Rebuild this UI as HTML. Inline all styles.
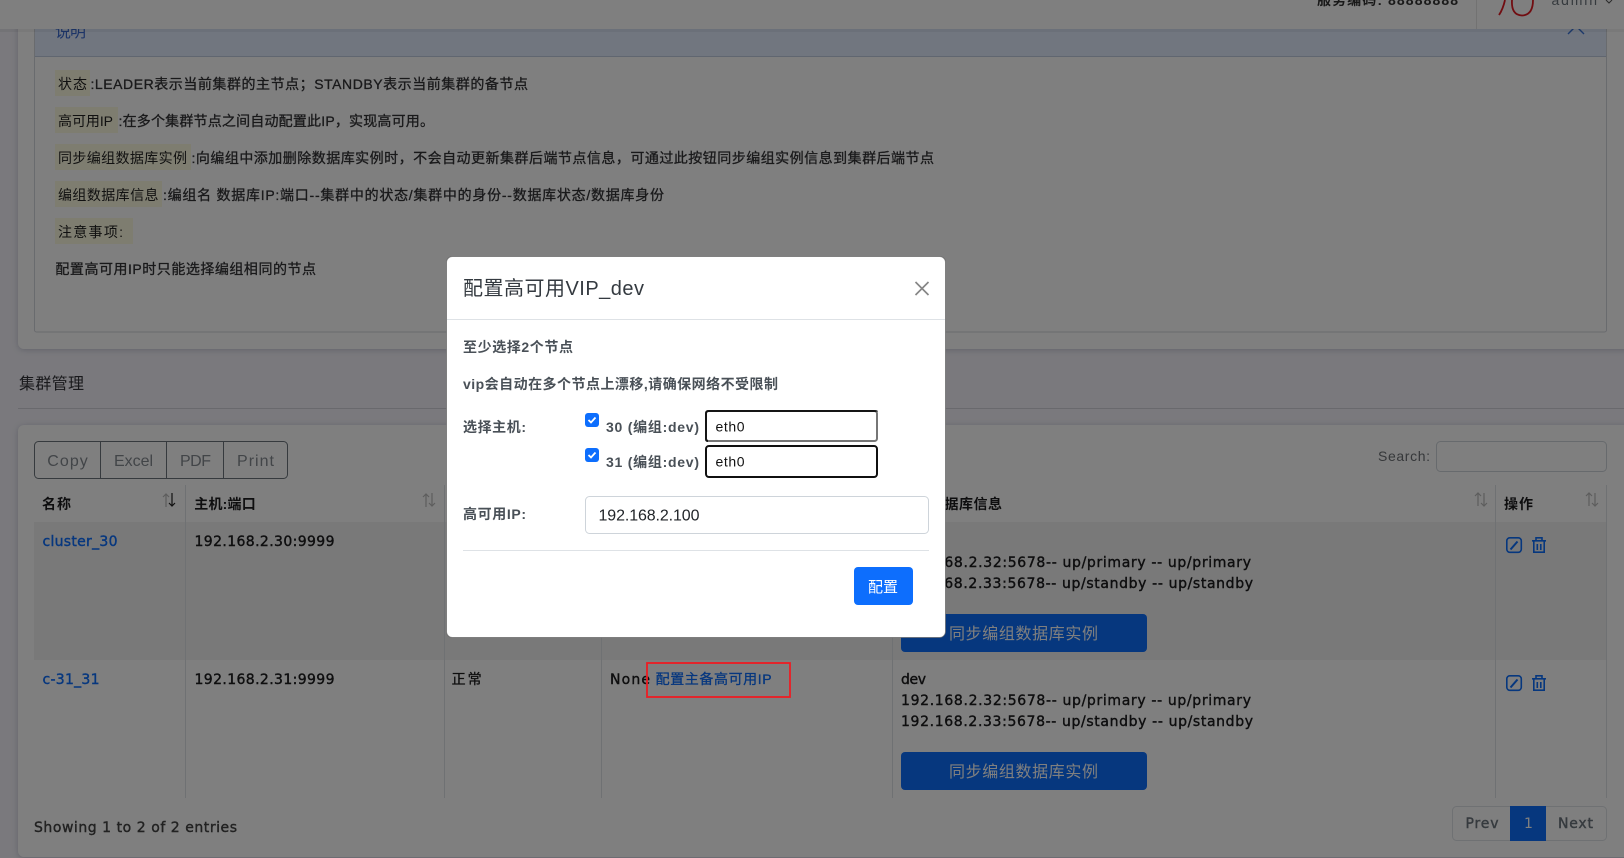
<!DOCTYPE html>
<html lang="zh-CN">
<head>
<meta charset="utf-8">
<title>集群管理</title>
<style>
html,body{margin:0;padding:0;width:1624px;height:858px;overflow:hidden;background:#f4f3fa}
svg{display:block}
text{font-family:"Liberation Sans","Noto Sans CJK SC",sans-serif;font-size:14px;white-space:pre}
.m{font-weight:500}
.b{font-weight:700}
.lk{fill:#0d6efd}
.dk{fill:#1c1c1e}
.dv{font-family:"DejaVu Sans","Noto Sans CJK SC",sans-serif;stroke-width:.4}
.dv.dk{stroke:#1c1c1e}
.dv.lk{stroke:#0d6efd}
.dv.gr{fill:#6c757d;stroke:#6c757d}
.dv.gs{fill:#444;stroke:#444}
.sb{stroke-width:.3}
.dk.sb{stroke:#1c1c1e}
.lk.sb{stroke:#0d6efd}
.pn{fill:#333336;stroke:#333336;stroke-width:.3}
.hl{fill:#fdfbe0}
.lb{fill:#222}
.md{fill:#495057;font-weight:700}
.ib{fill:none;stroke:#0d6efd;stroke-width:1.6}
.card{filter:drop-shadow(0 1px 3px rgba(56,65,100,.25))}
</style>
</head>
<body>
<svg width="1624" height="858" viewBox="0 0 1624 858" xmlns="http://www.w3.org/2000/svg">
<rect width="1624" height="858" fill="#f4f3fa"/>

<!-- card 1 -->
<rect class="card" x="18" y="-20" width="1640" height="369" rx="6" fill="#fff"/>
<rect x="34.5" y="20" width="1572" height="312" rx="2" fill="#fff" stroke="#d2d6dc"/>
<rect x="35" y="29" width="1571" height="27" fill="#e2ecff"/>
<rect x="35" y="56" width="1571" height="1" fill="#c0cce0"/>
<text x="55" y="37" style="font-size:16px" fill="#3a6bd0" textLength="31">说明</text>
<polyline points="1568,34 1576,26 1584,34" fill="none" stroke="#3a74d8" stroke-width="1.4"/>

<!-- notes -->
<rect class="hl" x="55" y="70" width="35" height="26"/>
<text x="58" y="89" class="lb" textLength="29">状态</text>
<text x="90.5" y="89" class="pn" textLength="437.5">:LEADER表示当前集群的主节点；STANDBY表示当前集群的备节点</text>

<rect class="hl" x="55" y="107" width="63" height="26"/>
<text x="58" y="126" class="lb" textLength="55">高可用IP</text>
<text x="118.5" y="126" class="pn" textLength="315.5">:在多个集群节点之间自动配置此IP，实现高可用。</text>

<rect class="hl" x="55" y="144" width="136" height="26"/>
<text x="58" y="163" class="lb" textLength="129">同步编组数据库实例</text>
<text x="191.5" y="163" class="pn" textLength="742.5">:向编组中添加删除数据库实例时，不会自动更新集群后端节点信息，可通过此按钮同步编组实例信息到集群后端节点</text>

<rect class="hl" x="55" y="181" width="107" height="26"/>
<text x="58" y="200" class="lb" textLength="100.5">编组数据库信息</text>
<text x="163" y="200" class="pn" textLength="501">:编组名 数据库IP:端口--集群中的状态/集群中的身份--数据库状态/数据库身份</text>

<rect class="hl" x="55" y="218" width="78" height="26"/>
<text x="58" y="237" class="lb" textLength="65">注意事项:</text>

<text x="55.4" y="274" class="pn" textLength="260.6">配置高可用IP时只能选择编组相同的节点</text>

<!-- section title -->
<text x="19" y="389" style="font-size:16px" fill="#333338" textLength="65">集群管理</text>
<rect x="18" y="408" width="1606" height="1" fill="#d2d2da"/>

<!-- card 2 -->
<rect class="card" x="18" y="425" width="1640" height="432" rx="6" fill="#fff"/>

<!-- buttons -->
<rect x="34.5" y="441.5" width="253" height="37" rx="4" fill="#fff" stroke="#6c757d"/>
<path d="M100.5 442V478M166.5 442V478M223.5 442V478" stroke="#6c757d"/>
<g fill="#858a91">
<text x="47.3" y="466" style="font-size:16px" textLength="40.5">Copy</text>
<text x="114" y="466" style="font-size:16px" textLength="39">Excel</text>
<text x="180" y="466" style="font-size:16px" textLength="31">PDF</text>
<text x="237" y="466" style="font-size:16px" textLength="37">Print</text>
</g>

<!-- search -->
<text x="1378" y="461" fill="#6c7075" textLength="52">Search:</text>
<rect x="1436.5" y="441.5" width="170" height="30" rx="4" fill="#fff" stroke="#ced4da"/>

<!-- table -->
<rect x="34" y="522" width="1573" height="138" fill="#f2f2f2"/>
<path d="M185.5 485V798M444.5 485V798M601.5 485V798M892.5 485V798M1495.5 485V798M1606.5 485V798" stroke="#dee2e6"/>

<text x="42" y="509" class="dk b" textLength="29">名称</text>
<text x="194.3" y="509" class="dk b" textLength="61.4">主机:端口</text>
<text x="901" y="509" class="dk b" textLength="101">编组数据库信息</text>
<text x="1504" y="509" class="dk b" textLength="29">操作</text>

<!-- sort arrows -->
<g fill="none" stroke-width="1.2">
<path d="M166 507V494M163 497L166 494L169 497" stroke="#bbb"/>
<path d="M172 493V506M169 503L172 506L175 503" stroke="#222"/>
<path d="M426 507V494M423 497L426 494L429 497M432 493V506M429 503L432 506L435 503" stroke="#bbb"/>
<path d="M1478 506V493M1475 496L1478 493L1481 496M1484 493V506M1481 503L1484 506L1487 503" stroke="#bbb"/>
<path d="M1589 506V493M1586 496L1589 493L1592 496M1595 493V506M1592 503L1595 506L1598 503" stroke="#bbb"/>
</g>

<!-- row 1 -->
<text x="42.5" y="546" class="lk dv" textLength="75">cluster_30</text>
<text x="194.5" y="546" class="dk dv" textLength="140">192.168.2.30:9999</text>
<text x="901" y="546" class="dk dv" textLength="25">dev</text>
<text x="901" y="567" class="dk dv" textLength="350">192.168.2.32:5678-- up/primary -- up/primary</text>
<text x="901" y="588" class="dk dv" textLength="352">192.168.2.33:5678-- up/standby -- up/standby</text>
<rect x="901" y="614" width="246" height="38" rx="4" fill="#0d6efd"/>
<text x="949" y="639" style="font-size:16px" fill="#fff" textLength="149">同步编组数据库实例</text>
<g>
<rect class="ib" x="1506.8" y="537.8" width="14.5" height="14.5" rx="3"/>
<path d="M1510.5 549.5L1517.5 541.5" stroke="#0d6efd" stroke-width="2" fill="none"/>
<path class="ib" d="M1532 540.8H1546M1536 540.5V537.8H1542V540.5M1533.8 541V552.2H1544.2V541M1537.3 544V550M1540.8 544V550"/>
</g>

<!-- row 2 -->
<text x="42.5" y="684" class="lk dv" textLength="57">c-31_31</text>
<text x="194.5" y="684" class="dk dv" textLength="140">192.168.2.31:9999</text>
<text x="451.6" y="684" class="dk sb" textLength="30">正常</text>
<text x="610" y="684" class="dk dv" textLength="40">None</text>
<text x="655.6" y="684" class="lk sb" textLength="116">配置主备高可用IP</text>
<text x="901" y="684" class="dk dv" textLength="25">dev</text>
<text x="901" y="705" class="dk dv" textLength="350">192.168.2.32:5678-- up/primary -- up/primary</text>
<text x="901" y="726" class="dk dv" textLength="352">192.168.2.33:5678-- up/standby -- up/standby</text>
<rect x="901" y="752" width="246" height="38" rx="4" fill="#0d6efd"/>
<text x="949" y="777" style="font-size:16px" fill="#fff" textLength="149">同步编组数据库实例</text>
<g transform="translate(0,138)">
<rect class="ib" x="1506.8" y="537.8" width="14.5" height="14.5" rx="3"/>
<path d="M1510.5 549.5L1517.5 541.5" stroke="#0d6efd" stroke-width="2" fill="none"/>
<path class="ib" d="M1532 540.8H1546M1536 540.5V537.8H1542V540.5M1533.8 541V552.2H1544.2V541M1537.3 544V550M1540.8 544V550"/>
</g>

<!-- footer -->
<text x="34" y="832" class="dv gs" textLength="203">Showing 1 to 2 of 2 entries</text>
<rect x="1452.5" y="806.5" width="154" height="34" rx="4" fill="#fff" stroke="#dee2e6"/>
<rect x="1510" y="806" width="36" height="35" fill="#0d6efd"/>
<text x="1465.5" y="828" class="dv gr" textLength="33">Prev</text>
<text x="1524" y="828" fill="#fff" class="dv">1</text>
<text x="1558" y="828" class="dv gr" textLength="35">Next</text>

<!-- top bar -->
<rect x="0" y="29" width="1624" height="3" fill="#000" opacity=".05"/>
<rect x="0" y="0" width="1624" height="29" fill="#fff"/>
<rect x="1476" y="0" width="1" height="29" fill="#e4e4e4"/>
<text x="1317" y="5" class="b" fill="#333" textLength="141">服务编码: 88888888</text>
<path d="M1505 0Q1503 9 1499 15M1512 0Q1511 15 1522 15.5Q1533 15 1533 0" fill="none" stroke="#e31b23" stroke-width="1.8"/>
<text x="1551.5" y="5" fill="#6c757d" textLength="45.5">admin</text>
<path d="M1606 0L1609 3L1612 0" fill="none" stroke="#555" stroke-width="1"/>

<!-- backdrop -->
<rect width="1624" height="858" fill="#000" opacity=".5"/>

<!-- modal -->
<rect x="446.5" y="256.5" width="499" height="381" rx="6" fill="#fff" stroke="#555" stroke-opacity=".6"/>
<rect x="447" y="319" width="498" height="1" fill="#dee2e6"/>
<text x="463" y="295" style="font-size:20px" fill="#343a40" textLength="181">配置高可用VIP_dev</text>
<path d="M915.5 282L928.5 295M928.5 282L915.5 295" stroke="#868686" stroke-width="1.7" fill="none"/>

<text x="463" y="352" class="md" textLength="110">至少选择2个节点</text>
<text x="463" y="389" class="md" textLength="315">vip会自动在多个节点上漂移,请确保网络不受限制</text>
<text x="463" y="432" class="md" textLength="63">选择主机:</text>

<rect x="585" y="413" width="14" height="14" rx="3" fill="#0d6efd"/>
<path d="M588.5 420L591 422.5L595.5 417.5" fill="none" stroke="#fff" stroke-width="1.8"/>
<text x="606" y="432" class="md" textLength="93">30 (编组:dev)</text>
<rect x="706" y="411" width="171" height="30" rx="2.5" fill="#fff" stroke="#767676" stroke-width="2"/>
<path d="M877 411.5Q877 411 874 411H708.5Q706 411 706 413.5V439Q706 441 708 441" fill="none" stroke="#151515" stroke-width="2"/>
<text x="715.5" y="431.5" fill="#111" textLength="29">eth0</text>

<rect x="585" y="448" width="14" height="14" rx="3" fill="#0d6efd"/>
<path d="M588.5 455L591 457.5L595.5 452.5" fill="none" stroke="#fff" stroke-width="1.8"/>
<text x="606" y="467" class="md" textLength="93">31 (编组:dev)</text>
<rect x="706" y="446" width="171" height="31" rx="3" fill="#fff" stroke="#101010" stroke-width="2"/>
<text x="715.5" y="466.5" fill="#111" textLength="29">eth0</text>

<text x="463" y="519" class="md" textLength="63">高可用IP:</text>
<rect x="585.5" y="496.5" width="343" height="37" rx="4" fill="#fff" stroke="#ced4da"/>
<text x="598.5" y="520.5" style="font-size:16px" fill="#212529" textLength="101">192.168.2.100</text>
<rect x="463" y="550" width="466" height="1" fill="#dee2e6"/>
<rect x="854" y="567" width="59" height="38" rx="4" fill="#0d6efd"/>
<text x="868" y="592" style="font-size:15px" fill="#fff" textLength="30">配置</text>

<!-- annotation -->
<rect x="647" y="663" width="143" height="34" fill="none" stroke="#ed1c24" stroke-width="1.8"/>
</svg>
</body>
</html>
